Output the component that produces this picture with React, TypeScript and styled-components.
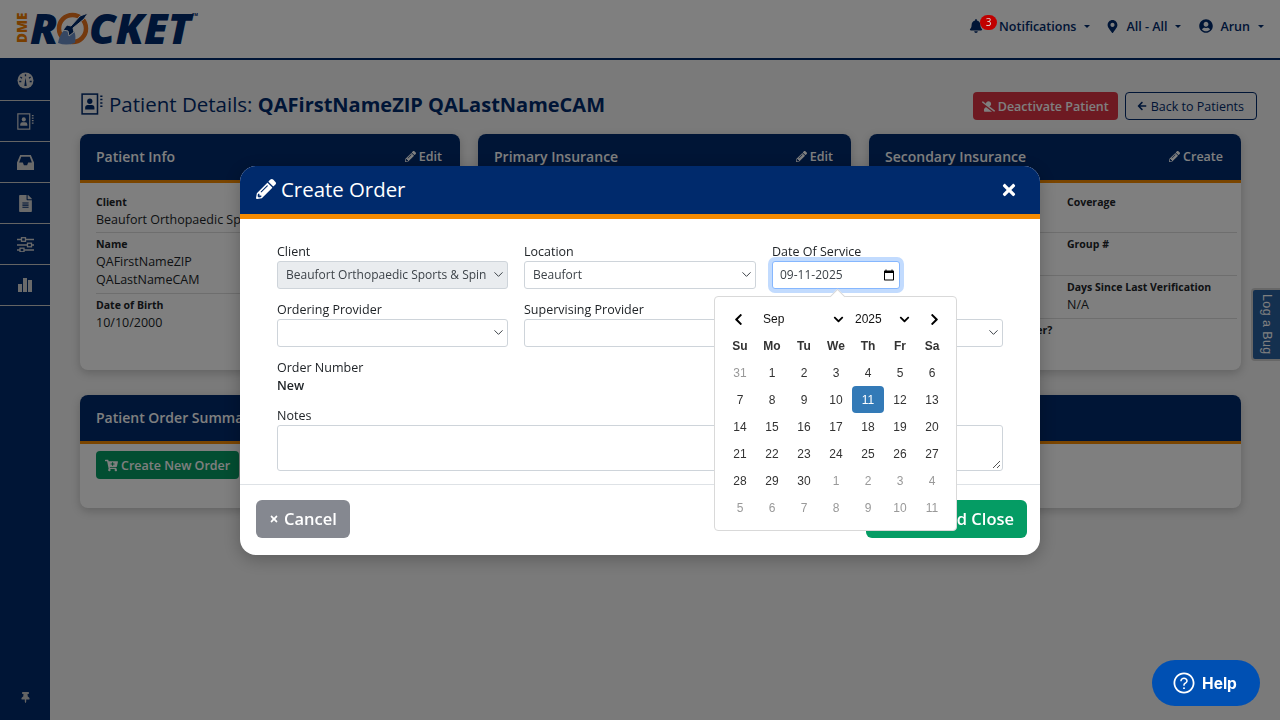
import { ReactNode } from "react";
import styled, { createGlobalStyle } from "styled-components";
import {
  FaArrowLeft,
  FaBell,
  FaCartPlus,
  FaChevronDown,
  FaChevronLeft,
  FaChevronRight,
  FaFileAlt,
  FaMapMarkerAlt,
  FaPencilAlt,
  FaSave,
  FaThumbtack,
  FaTimes,
  FaUserCircle,
  FaUserSlash
} from "react-icons/fa";
import { LuChevronDown } from "react-icons/lu";
import { MdCalendarToday } from "react-icons/md";
import { AiOutlineQuestionCircle } from "react-icons/ai";

const navy = "#002a6c";
const orange = "#f58a00";
const line = "#ced4da";

const GlobalStyle = createGlobalStyle`
  * { box-sizing: border-box; }
  html, body { margin: 0; height: 100%; overflow: hidden; }
  body {
    background: #f4f4f4;
    color: #212529;
    font-family: "Open Sans", "Liberation Sans", sans-serif;
    font-size: 13px;
  }
`;

const Shell = styled.div`
  width: 1280px;
  height: 720px;
  display: flex;
  flex-direction: column;
  overflow: hidden;
`;

const TopBar = styled.header`
  height: 60px;
  flex: none;
  background: #fff;
  border-bottom: 2px solid ${navy};
  display: flex;
  align-items: center;
  justify-content: space-between;
  padding: 0 16px 4px 15px;
`;

const LogoSvg = styled.svg`
  overflow: visible;
`;

const NavList = styled.nav`
  display: flex;
  align-items: center;
  gap: 15px;
  padding-bottom: 2px;
`;

const NavItem = styled.div`
  position: relative;
  display: flex;
  align-items: center;
  gap: 7px;
  margin-left: 3px;
  color: ${navy};
  font-weight: 600;
  font-size: 12.5px;

  &:first-child {
    margin-right: -2px;
  }

  &::after {
    content: "";
    margin-left: 1px;
    border-top: 3.5px solid ${navy};
    border-left: 3.5px solid transparent;
    border-right: 3.5px solid transparent;
  }
`;

const BellWrap = styled.span`
  display: flex;
  margin-right: 9px;
`;

const Badge = styled.span`
  position: absolute;
  z-index: 15;
  left: 11px;
  top: -3px;
  width: 17px;
  height: 15px;
  border-radius: 8px;
  background: #c00000;
  color: #ddd;
  font-size: 10px;
  font-weight: 400;
  line-height: 15px;
  text-align: center;
`;

const Body = styled.div`
  flex: 1;
  display: flex;
  min-height: 0;
`;

const SideBar = styled.aside`
  width: 50px;
  flex: none;
  background: ${navy};
  display: flex;
  flex-direction: column;
`;

const SideItem = styled.div`
  height: 41px;
  flex: none;
  display: flex;
  align-items: center;
  justify-content: center;
  color: #d4d4d4;
  border-bottom: 1px solid #c9c9c9;
  font-size: 17px;
`;

const SidePin = styled.div`
  margin-top: auto;
  height: 46px;
  display: flex;
  align-items: center;
  justify-content: center;
  color: #c9c9c9;
  font-size: 11px;
`;

const Main = styled.main`
  flex: 1;
  padding: 32px 23px 0 30px;
  min-width: 0;
`;

const TitleRow = styled.div`
  height: 28px;
  display: flex;
  align-items: center;
  justify-content: space-between;
  margin-bottom: 14px;
`;

const Title = styled.h1`
  margin: 0;
  padding: 0 0 4px 1px;
  display: flex;
  align-items: center;
  gap: 6px;
  color: ${navy};
  font-size: 20.5px;
  font-weight: 400;
  white-space: pre;

  strong {
    font-size: 20px;
    font-weight: 700;
  }
`;

const TitleActions = styled.div`
  display: flex;
  gap: 7px;
`;

const SmallButton = styled.div<{ $tone: "danger" | "outline" | "success" }>`
  height: 28px;
  display: inline-flex;
  align-items: center;
  gap: ${(p) => (p.$tone === "outline" ? 4 : 3)}px;
  padding: ${(p) => (p.$tone === "outline" ? "0 12px 0 11px" : "0 8px")};
  border-radius: 4px;
  font-size: 12.5px;
  font-weight: ${(p) => (p.$tone === "outline" ? 500 : 600)};
  color: ${(p) => (p.$tone === "outline" ? navy : "#fff")};
  background: ${(p) =>
    p.$tone === "danger" ? "#dc3545" : p.$tone === "success" ? "#059c64" : "transparent"};
  border: 1px solid ${(p) => (p.$tone === "outline" ? navy : "transparent")};
`;

const CardGrid = styled.div`
  display: grid;
  grid-template-columns: 380px 373px 372px;
  column-gap: 18px;
  margin-bottom: 25px;
`;

const Card = styled.section<{ $height: number }>`
  height: ${(p) => p.$height}px;
  background: #fff;
  border-radius: 8px;
  box-shadow: 0 3px 10px rgba(0, 0, 0, 0.2);
  overflow: hidden;
`;

const WideCard = styled(Card)`
  width: 1161px;
`;

const CardHead = styled.div`
  height: 49px;
  background: ${navy};
  border-bottom: 3px solid ${orange};
  color: #fff;
  padding: 0 18px 1px 16px;
  display: flex;
  align-items: center;
  justify-content: space-between;
  font-size: 14px;
  font-weight: 600;
`;

const CardLink = styled.span`
  display: flex;
  align-items: center;
  gap: 3px;
  font-size: 12.5px;
  font-weight: 600;
`;

const CardBody = styled.div`
  padding: 8px 4px 0 16px;
`;

const InfoRow = styled.div<{ $height: number }>`
  height: ${(p) => p.$height}px;
  display: grid;
  grid-template-columns: 182px 1fr;
  border-bottom: 1px solid #dcdcdc;
  margin-top: 4px;

  &:last-child {
    border-bottom: 0;
  }
`;

const InfoCell = styled.div`
  line-height: 18px;
  font-size: 12.5px;
  white-space: nowrap;
`;

const InfoLabel = styled.div`
  font-size: 10.5px;
  font-weight: 700;
  line-height: 15px;
  margin-bottom: 1px;
`;

const OrderBody = styled.div`
  padding: 7px 16px;
`;

const LogBug = styled.div`
  position: fixed;
  right: -5px;
  top: 288px;
  width: 34px;
  height: 73px;
  padding-right: 3px;
  display: flex;
  align-items: center;
  justify-content: center;
  background: #29609e;
  border: 2px solid #cfcfcf;
  border-radius: 4px;
  color: #fff;
  writing-mode: vertical-rl;
  font-family: "Liberation Sans", Arial, sans-serif;
  font-size: 12.5px;
  letter-spacing: 0.4px;
`;

const Backdrop = styled.div`
  position: fixed;
  inset: 0;
  z-index: 10;
  background: rgba(0, 0, 0, 0.5);
`;

const Modal = styled.div`
  position: fixed;
  z-index: 20;
  left: 240px;
  top: 166px;
  width: 800px;
  height: 389px;
  background: #fff;
  border-radius: 16px;
  display: flex;
  flex-direction: column;
  box-shadow: 0 4px 18px rgba(0, 0, 0, 0.25);
`;

const ModalHead = styled.div`
  height: 53px;
  flex: none;
  background: ${navy};
  border-bottom: 5px solid ${orange};
  border-radius: 16px 16px 0 0;
  color: #fff;
  display: flex;
  align-items: center;
  justify-content: space-between;
  padding: 0 22px 0 16px;
`;

const ModalTitle = styled.h2`
  margin: 0;
  padding-bottom: 2px;
  display: flex;
  align-items: center;
  gap: 5px;
  font-size: 20.4px;
  font-weight: 400;
`;

const ModalBody = styled.div`
  position: relative;
  flex: 1;
  padding: 25px 37px 0;
  border-bottom: 1px solid #dee2e6;
`;

const FormGrid = styled.div`
  display: grid;
  grid-template-columns: 231px 232px 231px;
  column-gap: 16px;
`;

const Field = styled.div<{ $span?: boolean }>`
  grid-column: ${(p) => (p.$span ? "1 / -1" : "auto")};
  margin-bottom: 13px;
`;

const Label = styled.div`
  height: 17px;
  line-height: 15px;
  font-size: 12.5px;
  color: #212529;
`;

const SelectBox = styled.div<{ $disabled?: boolean }>`
  height: 28px;
  display: flex;
  align-items: center;
  justify-content: space-between;
  padding: 0 1px 1px 8px;
  border: 1px solid ${line};
  border-radius: 3px;
  background: ${(p) => (p.$disabled ? "#e9ecef" : "#fff")};
  color: #3d4349;
  font-size: 12px;
  white-space: nowrap;
  overflow: hidden;

  svg {
    flex: none;
    stroke-width: 1.6;
  }
`;

const DateInput = styled.div`
  width: 128px;
  height: 28px;
  display: flex;
  align-items: center;
  justify-content: space-between;
  padding: 0 4px 1px 7px;
  border: 1px solid #86b7fe;
  border-radius: 3px;
  background: #fff;
  color: #3d4349;
  font-size: 12px;
  box-shadow: 0 0 0 4px #c2dbfe;
`;

const ReadValue = styled.div`
  font-size: 12.5px;
  font-weight: 600;
  line-height: 18px;
  height: 18px;
`;

const NotesBox = styled.div`
  position: relative;
  height: 46px;
  border: 1px solid ${line};
  border-radius: 3px;
`;

const Grip = styled.svg`
  position: absolute;
  right: 1px;
  bottom: 1px;
`;

const ModalFoot = styled.div`
  height: 71px;
  flex: none;
  display: flex;
  align-items: center;
  justify-content: space-between;
  padding: 0 13px 4px 16px;
`;

const BigButton = styled.div<{ $tone: "muted" | "save" }>`
  height: 38px;
  display: flex;
  align-items: center;
  gap: 5px;
  padding: 0 13px;
  border-radius: 6px;
  background: ${(p) => (p.$tone === "muted" ? "#858890" : "#059c64")};
  color: #fff;
  font-size: 16.5px;
  font-weight: 600;
`;

const Picker = styled.div`
  position: absolute;
  z-index: 30;
  left: 474px;
  top: 77px;
  width: 243px;
  height: 235px;
  background: #fff;
  border: 1px solid #d9d9d9;
  border-radius: 4px;
  padding: 8px 9px 0;
  font-family: "Liberation Sans", Arial, sans-serif;
  font-size: 12px;
  color: #333;

  &::before {
    content: "";
    position: absolute;
    left: 117px;
    top: -6px;
    width: 10px;
    height: 10px;
    background: #fff;
    border-left: 1px solid #d9d9d9;
    border-top: 1px solid #d9d9d9;
    transform: rotate(45deg);
  }
`;

const PickerHead = styled.div`
  height: 27px;
  padding-top: 1px;
  display: grid;
  grid-template-columns: 39px 70px 10px 12px 44px 10px 19px 12px;
  align-items: center;
  color: #111;
  font-size: 12px;
`;

const NavArrow = styled.span`
  display: flex;
  padding-left: 8px;
`;

const DayGrid = styled.div`
  display: grid;
  grid-template-columns: repeat(7, 32px);
  grid-auto-rows: 27px;
`;

const HeadCell = styled.div`
  display: flex;
  align-items: center;
  justify-content: center;
  font-weight: 700;
  color: #333;
`;

const DayCell = styled.div<{ $muted?: boolean; $active?: boolean }>`
  display: flex;
  align-items: center;
  justify-content: center;
  border-radius: 4px;
  background: ${(p) => (p.$active ? "#337ab7" : "transparent")};
  color: ${(p) => (p.$active ? "#fff" : p.$muted ? "#999" : "#333")};
`;

const HelpButton = styled.div`
  position: fixed;
  z-index: 40;
  left: 1152px;
  top: 660px;
  width: 108px;
  height: 46px;
  padding-right: 3px;
  border-radius: 23px;
  background: #0050b3;
  color: #fff;
  display: flex;
  align-items: center;
  justify-content: center;
  gap: 6px;
  font-family: Inter, "Liberation Sans", sans-serif;
  font-size: 15.5px;
  font-weight: 700;
`;

const Logo = () => (
  <LogoSvg width="190" height="40" viewBox="0 0 190 40">
    <text
      transform="translate(12 36) rotate(-90)"
      fontFamily="Open Sans"
      fontSize="13.5"
      fontWeight="800"
      fill="#f07d00"
    >
      DME
    </text>
    <text x="15" y="37" fontFamily="Open Sans" fontSize="43" fontWeight="800" fontStyle="italic" fill={navy}>
      R
    </text>
    <circle cx="57.5" cy="21.5" r="13.5" fill="none" stroke="#e8721c" strokeWidth="4.5" />
    <path d="M43 36 q3 -15 12 -14 q7 1 5 14 q-9 3 -17 0 z" fill="#6d8fc7" />
    <path
      d="M73 6 l-8 3 -9 10 -4 -1 -4 5 5 1 1 5 5 -4 -1 -4 11 -9 z"
      fill={navy}
      stroke="#fff"
      strokeWidth="1"
    />
    <text x="74" y="37" fontFamily="Open Sans" fontSize="43" fontWeight="800" fontStyle="italic" fill={navy} textLength="102" lengthAdjust="spacingAndGlyphs">
      CKET
    </text>
    <text x="177" y="9" fontFamily="Open Sans" fontSize="4" fontWeight="700" fill={navy}>
      TM
    </text>
  </LogoSvg>
);

const AddressBook = ({ size }: { size: number }) => (
  <svg width={size} height={size} viewBox="0 0 20 20" fill="none">
    <rect x="1" y="1" width="14" height="18" stroke="currentColor" strokeWidth="1.4" />
    <circle cx="8" cy="7.5" r="2.4" fill="currentColor" />
    <path d="M3.8 15 v-1.6 q0 -2.4 2.4 -2.4 h3.6 q2.4 0 2.4 2.4 v1.6 z" fill="currentColor" />
    <path d="M17.5 3 h2 M17.5 6 h2 M17.5 9 h2 M17.5 12 h2" stroke="currentColor" strokeWidth="1.4" />
  </svg>
);

const GaugeIcon = () => (
  <svg width="17" height="17" viewBox="0 0 17 17">
    <circle cx="8.5" cy="8.5" r="8" fill="currentColor" />
    <path
      d="M8.5 2.2 v2 M3.4 5 l1.6 1.2 M13.6 5 l-1.6 1.2 M2.3 9.5 h2 M12.7 9.5 h2"
      stroke={navy}
      strokeWidth="1.3"
    />
    <path d="M7.3 14 L8.5 5.5 L9.7 14 z" fill={navy} />
  </svg>
);

const TrayIcon = () => (
  <svg width="17" height="15" viewBox="0 0 16 14" fill="currentColor">
    <path
      fillRule="evenodd"
      d="M3 0 H13 L16 7 V14 H0 V7 Z M4 1.5 L2 7 H5.5 L6.5 9.5 H9.5 L10.5 7 H14 L12 1.5 Z"
    />
  </svg>
);

const SlidersIcon = () => (
  <svg width="17" height="15" viewBox="0 0 17 15" stroke="currentColor" strokeWidth="1.3">
    <path d="M0 2.5 H17 M0 8 H17 M0 13 H17" />
    <rect x="4.5" y="0.7" width="4" height="3.6" fill={navy} />
    <rect x="10.5" y="6.2" width="4" height="3.6" fill={navy} />
    <rect x="3" y="11.2" width="4" height="3.6" fill={navy} />
  </svg>
);

const BarsIcon = () => (
  <svg width="14" height="14" viewBox="0 0 14 14" fill="currentColor">
    <rect x="0" y="6" width="4" height="8" />
    <rect x="5" y="0" width="4" height="14" />
    <rect x="10" y="2" width="4" height="12" />
  </svg>
);

const Info = ({ label, children }: { label: string; children?: ReactNode }) => (
  <InfoCell>
    <InfoLabel>{label}</InfoLabel>
    {children}
  </InfoCell>
);

const previous = [31];
const current = Array.from({ length: 30 }, (_, i) => i + 1);
const next = Array.from({ length: 11 }, (_, i) => i + 1);

const App = () => {
  return (
    <Shell>
      <GlobalStyle />
      <TopBar>
        <Logo />
        <NavList>
          <NavItem>
            <BellWrap>
              <FaBell size={14} />
            </BellWrap>
            <Badge>3</Badge>
            Notifications
          </NavItem>
          <NavItem>
            <FaMapMarkerAlt size={13} />
            All - All
          </NavItem>
          <NavItem>
            <FaUserCircle size={14} />
            Arun
          </NavItem>
        </NavList>
      </TopBar>
      <Body>
        <SideBar>
          <SideItem>
            <GaugeIcon />
          </SideItem>
          <SideItem>
            <AddressBook size={17} />
          </SideItem>
          <SideItem>
            <TrayIcon />
          </SideItem>
          <SideItem>
            <FaFileAlt size={17} />
          </SideItem>
          <SideItem>
            <SlidersIcon />
          </SideItem>
          <SideItem>
            <BarsIcon />
          </SideItem>
          <SidePin>
            <FaThumbtack />
          </SidePin>
        </SideBar>
        <Main>
          <TitleRow>
            <Title>
              <AddressBook size={22} />
              <span>
                Patient Details: <strong>QAFirstNameZIP QALastNameCAM</strong>
              </span>
            </Title>
            <TitleActions>
              <SmallButton $tone="danger">
                <FaUserSlash size={13} />
                Deactivate Patient
              </SmallButton>
              <SmallButton $tone="outline">
                <FaArrowLeft size={10} />
                Back to Patients
              </SmallButton>
            </TitleActions>
          </TitleRow>
          <CardGrid>
            <Card $height={236}>
              <CardHead>
                Patient Info
                <CardLink>
                  <FaPencilAlt size={11} />
                  Edit
                </CardLink>
              </CardHead>
              <CardBody>
                <InfoRow $height={38}>
                  <Info label="Client">Beaufort Orthopaedic Sports &amp; Spine</Info>
                </InfoRow>
                <InfoRow $height={57}>
                  <Info label="Name">
                    QAFirstNameZIP
                    <br />
                    QALastNameCAM
                  </Info>
                </InfoRow>
                <InfoRow $height={50}>
                  <Info label="Date of Birth">10/10/2000</Info>
                </InfoRow>
              </CardBody>
            </Card>
            <Card $height={236}>
              <CardHead>
                Primary Insurance
                <CardLink>
                  <FaPencilAlt size={11} />
                  Edit
                </CardLink>
              </CardHead>
            </Card>
            <Card $height={236}>
              <CardHead>
                Secondary Insurance
                <CardLink>
                  <FaPencilAlt size={11} />
                  Create
                </CardLink>
              </CardHead>
              <CardBody>
                <InfoRow $height={38}>
                  <Info label="Payer" />
                  <Info label="Coverage" />
                </InfoRow>
                <InfoRow $height={39}>
                  <Info label="Policy #" />
                  <Info label="Group #" />
                </InfoRow>
                <InfoRow $height={39}>
                  <Info label="Last Verified" />
                  <Info label="Days Since Last Verification">N/A</Info>
                </InfoRow>
                <InfoRow $height={38}>
                  <Info label="Is Patient the Prime Subscriber?" />
                </InfoRow>
              </CardBody>
            </Card>
          </CardGrid>
          <WideCard $height={113}>
            <CardHead>Patient Order Summary</CardHead>
            <OrderBody>
              <SmallButton $tone="success">
                <FaCartPlus size={13} />
                Create New Order
              </SmallButton>
            </OrderBody>
          </WideCard>
        </Main>
      </Body>
      <LogBug>Log a Bug</LogBug>
      <Backdrop />
      <Modal>
        <ModalHead>
          <ModalTitle>
            <FaPencilAlt size={20} />
            Create Order
          </ModalTitle>
          <FaTimes size={18} />
        </ModalHead>
        <ModalBody>
          <FormGrid>
            <Field>
              <Label>Client</Label>
              <SelectBox $disabled>
                Beaufort Orthopaedic Sports &amp; Spin
                <LuChevronDown size={15} />
              </SelectBox>
            </Field>
            <Field>
              <Label>Location</Label>
              <SelectBox>
                Beaufort
                <LuChevronDown size={15} />
              </SelectBox>
            </Field>
            <Field>
              <Label>Date Of Service</Label>
              <DateInput>
                09-11-2025
                <MdCalendarToday size={12} color="#000" />
              </DateInput>
            </Field>
            <Field>
              <Label>Ordering Provider</Label>
              <SelectBox>
                &nbsp;
                <LuChevronDown size={15} />
              </SelectBox>
            </Field>
            <Field>
              <Label>Supervising Provider</Label>
              <SelectBox>&nbsp;</SelectBox>
            </Field>
            <Field>
              <Label>Referring Provider</Label>
              <SelectBox>
                &nbsp;
                <LuChevronDown size={15} />
              </SelectBox>
            </Field>
            <Field $span>
              <Label>Order Number</Label>
              <ReadValue>New</ReadValue>
            </Field>
            <Field $span>
              <Label>Notes</Label>
              <NotesBox>
                <Grip width="10" height="10" viewBox="0 0 10 10" stroke="#555">
                  <path d="M2 9 L9 2 M6 9 L9 6" />
                </Grip>
              </NotesBox>
            </Field>
          </FormGrid>
          <Picker>
            <PickerHead>
              <NavArrow>
                <FaChevronLeft size={13} color="#000" />
              </NavArrow>
              <span>Sep</span>
              <FaChevronDown size={11} color="#000" />
              <span />
              <span>2025</span>
              <FaChevronDown size={11} color="#000" />
              <span />
              <FaChevronRight size={13} color="#000" />
            </PickerHead>
            <DayGrid>
              {["Su", "Mo", "Tu", "We", "Th", "Fr", "Sa"].map((d) => (
                <HeadCell key={d}>{d}</HeadCell>
              ))}
              {previous.map((d) => (
                <DayCell key={`p${d}`} $muted>
                  {d}
                </DayCell>
              ))}
              {current.map((d) => (
                <DayCell key={`c${d}`} $active={d === 11}>
                  {d}
                </DayCell>
              ))}
              {next.map((d) => (
                <DayCell key={`n${d}`} $muted>
                  {d}
                </DayCell>
              ))}
            </DayGrid>
          </Picker>
        </ModalBody>
        <ModalFoot>
          <BigButton $tone="muted">
            <FaTimes size={10} />
            Cancel
          </BigButton>
          <BigButton $tone="save">
            <FaSave size={11} />
            Save and Close
          </BigButton>
        </ModalFoot>
      </Modal>
      <HelpButton>
        <AiOutlineQuestionCircle size={24} />
        Help
      </HelpButton>
    </Shell>
  );
};

export default App;
